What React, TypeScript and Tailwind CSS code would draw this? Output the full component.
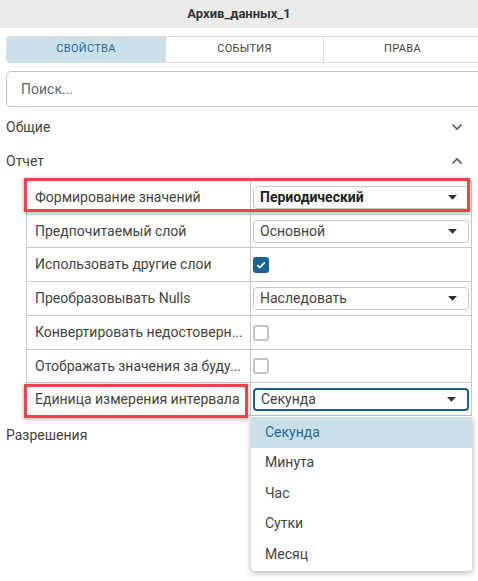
import { useState } from "react";

const Caret = () => (
  <svg width="9" height="5" viewBox="0 0 9 5" className="shrink-0">
    <path d="M0 0h9L4.5 4.8z" fill="#333" />
  </svg>
);

const Chevron = ({ up }: { up?: boolean }) => (
  <svg width="12" height="8" viewBox="0 0 12 8">
    <path
      d={up ? "M1.5 6.5 6 2l4.5 4.5" : "M1.5 1.5 6 6l4.5-4.5"}
      fill="none"
      stroke="#555"
      strokeWidth="1.6"
    />
  </svg>
);

const Select = ({ value, bold, active }: { value: string; bold?: boolean; active?: boolean }) => (
  <div
    className={`flex h-[23px] items-center justify-between rounded-[4px] bg-white pl-[6px] pr-[11px] ${
      active ? "border-2 border-[#1d5f8c] pl-[5px]" : "border border-[#c9c9c9]"
    }`}
  >
    <span className={bold ? "font-bold text-[#222]" : "text-[#444]"}>{value}</span>
    <Caret />
  </div>
);

const Check = ({ on }: { on?: boolean }) =>
  on ? (
    <div className="flex h-[16px] w-[16px] items-center justify-center rounded-[3px] bg-[#1b6294]">
      <svg width="10" height="8" viewBox="0 0 10 8">
        <path d="M1.2 4.2 3.8 6.6 8.8 1.4" fill="none" stroke="#fff" strokeWidth="1.6" />
      </svg>
    </div>
  ) : (
    <div className="h-[16px] w-[16px] rounded-[3px] border-2 border-[#c4c4c4] bg-white" />
  );

type Row = { label: string; value: React.ReactNode; h: string };

export default function App() {
  const [tab] = useState(0);
  const rows: Row[] = [
    { label: "Формирование значений", value: <Select value="Периодический" bold />, h: "h-[33px]" },
    { label: "Предпочитаемый слой", value: <Select value="Основной" />, h: "h-[33px]" },
    { label: "Использовать другие слои", value: <Check on />, h: "h-[34px]" },
    { label: "Преобразовывать Nulls", value: <Select value="Наследовать" />, h: "h-[34px]" },
    { label: "Конвертировать недостоверн...", value: <Check />, h: "h-[34px]" },
    { label: "Отображать значения за буду...", value: <Check />, h: "h-[33px]" },
    { label: "Единица измерения интервала", value: <Select value="Секунда" active />, h: "h-[33px]" },
  ];
  const tabs = ["СВОЙСТВА", "СОБЫТИЯ", "ПРАВА"];
  const options = ["Секунда", "Минута", "Час", "Сутки", "Месяц"];

  return (
    <div className="relative h-[581px] w-[478px] overflow-hidden bg-white font-['Roboto',sans-serif] text-[14px] text-[#444]">
      <div className="flex h-[28px] items-center justify-center bg-[#ebebeb] text-[13px] font-bold text-[#333]">
        Архив_данных_1
      </div>

      <div className="ml-[6px] mt-[8px] flex h-[27px] w-[500px] overflow-hidden rounded-[4px] border border-[#dcdcdc] text-[11px] tracking-[0.3px]">
        {tabs.map((t, i) => (
          <div
            key={t}
            className={`flex w-[158px] items-center justify-center ${
              i === tab ? "bg-[#cce0ea] text-[#1c6aa0]" : "text-[#444]"
            } ${i > 0 ? "border-l border-[#dcdcdc]" : ""}`}
          >
            {t}
          </div>
        ))}
      </div>

      <div className="ml-[6px] mt-[8px] flex h-[36px] w-[500px] items-center rounded-[5px] border border-[#c4c4c4] px-[14px] text-[14px] text-[#666]">
        Поиск...
      </div>

      <div className="mt-[7px] flex h-[26px] items-center justify-between pl-[6px] pr-[15px] text-[#444]">
        <span>Общие</span>
        <Chevron />
      </div>
      <div className="mt-[8px] flex h-[26px] items-center justify-between pl-[6px] pr-[15px] text-[#444]">
        <span>Отчет</span>
        <Chevron up />
      </div>

      <div className="ml-[26px] mt-[7px] w-[446px] border-x border-b border-[#c8c8c8]">
        {rows.map((r, i) => (
          <div key={i} className={`relative flex ${r.h} ${i > 0 ? "border-t border-[#c8c8c8]" : ""}`}>
            <div className="flex w-[224px] items-center border-r border-[#c8c8c8] pl-[8px] text-[#444]">
              {r.label}
            </div>
            <div className="flex flex-1 flex-col justify-center px-[2px]">{r.value}</div>
            {i === 0 && (
              <div className="pointer-events-none absolute left-[-3px] right-[1px] top-[-3px] bottom-[2px] border-[3px] border-[#f0424a] shadow-[0_1px_4px_rgba(0,0,0,0.35)]" />
            )}
            {i === 6 && (
              <div className="pointer-events-none absolute left-[-3px] top-[1px] bottom-[-3px] w-[224px] border-[3px] border-[#f0424a] shadow-[0_1px_4px_rgba(0,0,0,0.35)]" />
            )}
          </div>
        ))}
      </div>

      <div className="mt-[9px] pl-[6px] text-[#444]">Разрешения</div>

      <div className="absolute left-[251px] top-[416px] w-[221px] rounded-b-[4px] bg-white py-[1px] shadow-[0_2px_6px_rgba(0,0,0,0.3)]">
        {options.map((o, i) => (
          <div
            key={o}
            className={`flex h-[30.5px] items-center pl-[14px] ${
              i === 0 ? "bg-[#cce0ea] text-[#1c6aa0]" : "text-[#444]"
            }`}
          >
            {o}
          </div>
        ))}
      </div>
    </div>
  );
}
